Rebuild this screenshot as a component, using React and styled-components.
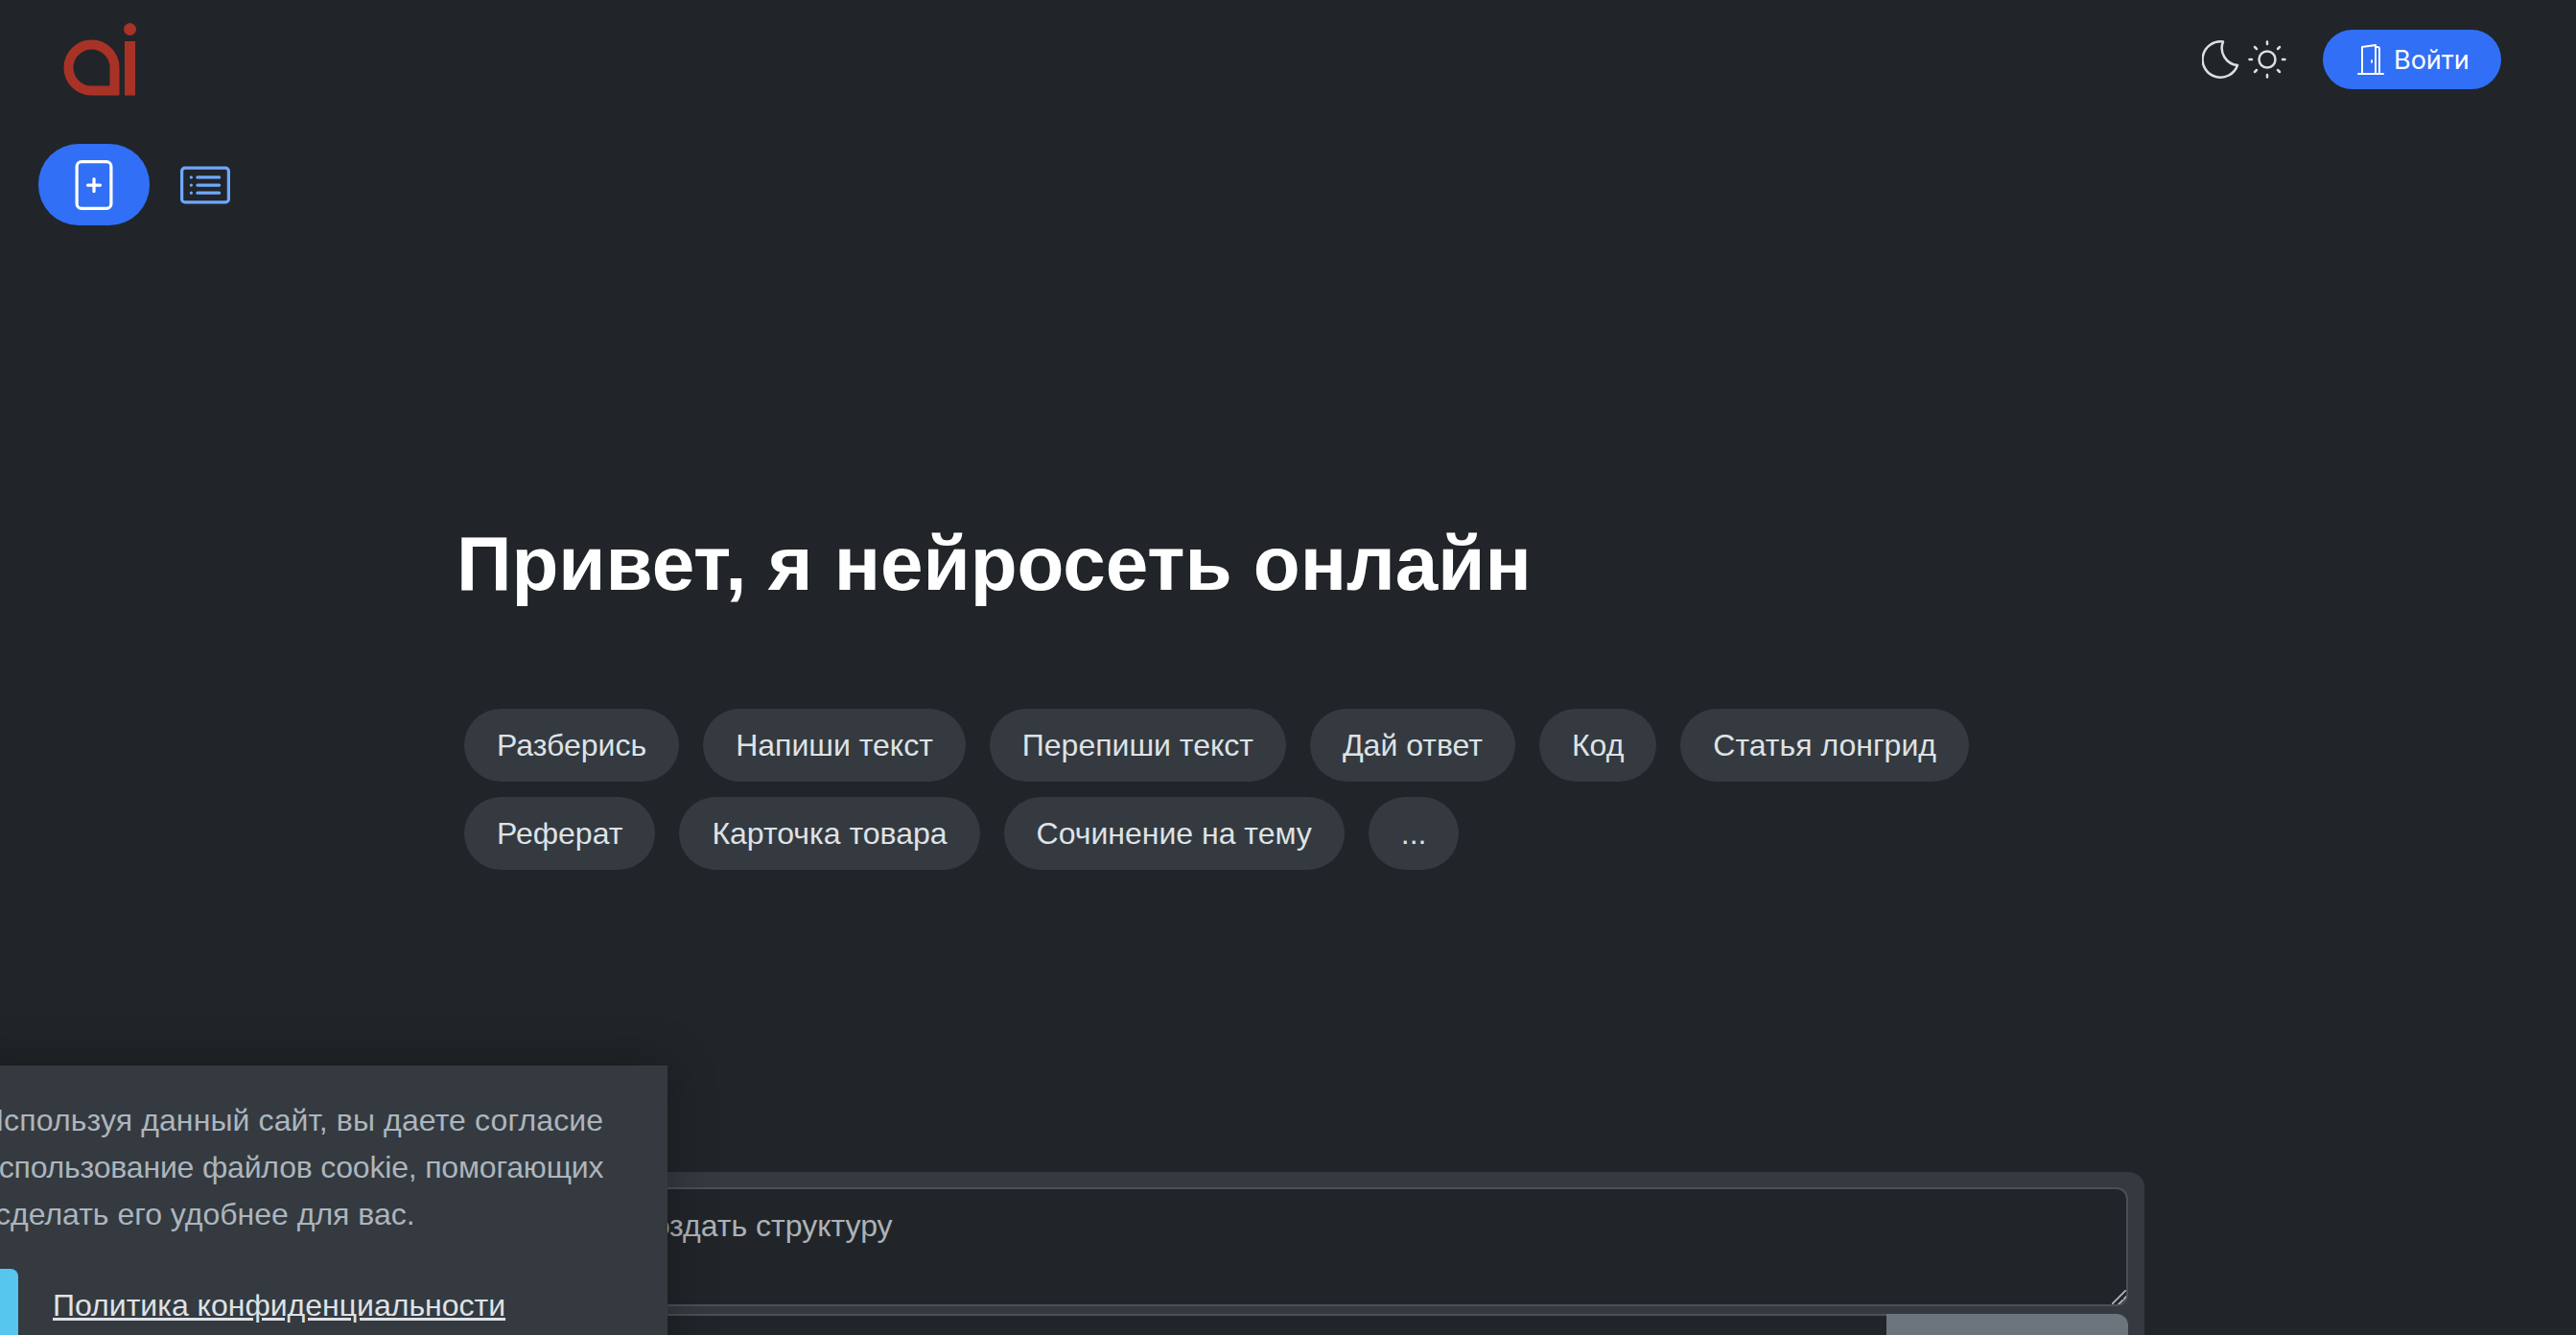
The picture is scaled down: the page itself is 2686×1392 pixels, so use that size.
import React from 'react';
import styled, { createGlobalStyle } from 'styled-components';
import { BsCardList, BsDoorOpen, BsFilePlus } from 'react-icons/bs';

const GlobalStyle = createGlobalStyle`
  html, body {
    margin: 0;
    padding: 0;
    background: #212529;
    font-family: "Liberation Sans", Arial, sans-serif;
    color: #dee2e6;
  }
  * {
    box-sizing: border-box;
  }
`;

const Page = styled.div`
  position: relative;
  height: 100vh;
  overflow: hidden;
  background: #212529;
`;

const Header = styled.header`
  display: flex;
  justify-content: space-between;
  align-items: flex-start;
  padding: 24px 78px 0 66px;
`;

const Logo = styled.svg`
  display: block;
  width: 76px;
  height: 76px;
`;

const HeaderActions = styled.div`
  display: flex;
  align-items: center;
  margin-top: 7px;
`;

const ThemeIcons = styled.div`
  display: flex;
  align-items: center;
  gap: 8px;
  margin-right: 38px;
`;

const ThemeIcon = styled.svg`
  display: block;
  width: 40px;
  height: 40px;
  fill: none;
  stroke: #dcdfe2;
  stroke-width: 2.5;
  stroke-linecap: round;
  stroke-linejoin: round;
`;

const LoginButton = styled.button`
  display: flex;
  align-items: center;
  gap: 8px;
  width: 186px;
  height: 62px;
  padding: 0 0 0 34px;
  border: 0;
  border-radius: 31px;
  background: #316ff6;
  color: #fff;
  font-family: Inter, "Liberation Sans", sans-serif;
  font-size: 27px;
`;

const ToolRow = styled.div`
  display: flex;
  align-items: center;
  gap: 32px;
  margin-top: 50px;
  padding-left: 40px;
`;

const NewChatButton = styled.button`
  display: flex;
  align-items: center;
  justify-content: center;
  width: 116px;
  height: 85px;
  padding: 0;
  border: 0;
  border-radius: 42px;
  background: #316ff6;
  color: #fff;
`;

const HistoryButton = styled.button`
  display: flex;
  padding: 0;
  border: 0;
  background: none;
  color: #6ea8fe;
`;

const Main = styled.main`
  padding-left: 476px;
`;

const Title = styled.h1`
  margin: 305px 0 0;
  font-size: 80px;
  line-height: 96px;
  font-weight: 700;
  color: #fff;
`;

const Chips = styled.div`
  display: flex;
  flex-wrap: wrap;
  gap: 16px 25px;
  max-width: 1600px;
  margin: 103px 0 0 8px;
`;

const Chip = styled.button`
  height: 76px;
  padding: 0 34px;
  border: 0;
  border-radius: 38px;
  background: #343a40;
  color: #dee2e6;
  font-family: inherit;
  font-size: 32px;
`;

const Composer = styled.form`
  width: 1783px;
  margin: 315px 0 0 -23px;
  padding: 16px 17px 0 16px;
  border-radius: 16px 16px 0 0;
  background: #343a40;
`;

const Prompt = styled.textarea`
  display: block;
  width: 100%;
  height: 124px;
  padding: 14px 24px;
  border: 2px solid #495057;
  border-radius: 12px;
  background: #212529;
  color: #dee2e6;
  font-family: inherit;
  font-size: 32px;
  line-height: 48px;
  &::placeholder {
    color: rgba(222, 226, 230, 0.75);
  }
  &::-webkit-resizer {
    background: linear-gradient(
      135deg,
      transparent 0 46%,
      #9a9ea3 46% 54%,
      transparent 54% 70%,
      #9a9ea3 70% 78%,
      transparent 78%
    );
  }
`;

const SubmitRow = styled.div`
  display: flex;
  margin-top: 8px;
`;

const TopicInput = styled.input`
  flex: 1;
  height: 90px;
  border: 2px solid #495057;
  border-right: 0;
  border-radius: 12px 0 0 12px;
  background: #212529;
`;

const SubmitButton = styled.button`
  width: 252px;
  height: 90px;
  border: 0;
  border-radius: 0 12px 12px 0;
  background: #6c757d;
`;

const CookiePanel = styled.aside`
  position: absolute;
  top: 1111px;
  left: -40px;
  width: 736px;
  height: 400px;
  padding: 33px 0 0 21px;
  background: #343a40;
  box-shadow: 0 0 48px rgba(0, 0, 0, 0.3);
`;

const CookieText = styled.p`
  margin: 0;
  font-size: 32px;
  line-height: 49px;
  color: #adb5bd;
`;

const CookieLine = styled.span`
  display: block;
  padding-left: ${(p) => p.$indent || 0}px;
  letter-spacing: ${(p) => p.$tracking || 0}px;
`;

const CookieActions = styled.div`
  display: flex;
  align-items: flex-start;
  gap: 36px;
  margin-top: 32px;
`;

const AcceptButton = styled.button`
  width: 38px;
  height: 76px;
  padding: 0;
  border: 0;
  border-radius: 8px;
  background: #57c6ee;
`;

const PolicyLink = styled.a`
  margin-top: 14px;
  font-size: 32px;
  line-height: 48px;
  color: #dee2e6;
  text-decoration: underline;
`;

const chips = [
  'Разберись',
  'Напиши текст',
  'Перепиши текст',
  'Дай ответ',
  'Код',
  'Статья лонгрид',
  'Реферат',
  'Карточка товара',
  'Сочинение на тему',
  '...',
];

export default function App() {
  return (
    <Page>
      <GlobalStyle />
      <Header>
        <Logo viewBox="66 24 76 76" aria-label="ai">
          <path d="M119.5 94.5H95.5a24 24 0 1 1 24-24z" fill="none" stroke="#a93226" strokeWidth="10" />
          <rect x="130" y="43" width="11" height="56.5" fill="#a93226" />
          <circle cx="135.5" cy="30.5" r="6.5" fill="#a93226" />
        </Logo>
        <HeaderActions>
          <ThemeIcons>
            <ThemeIcon viewBox="0 0 40 40">
              <path d="M22 1.5A18.7 18.7 0 1 0 37 26 A18 18 0 0 1 22 1.5Z" />
            </ThemeIcon>
            <ThemeIcon viewBox="0 0 40 40">
              <circle cx="20" cy="20" r="8.5" />
              <path d="M20 1.5v2.5M20 36v2.5M1.5 20H4M36 20h2.5M7 7l2 2M31 31l2 2M7 33l2-2M31 9l2-2" />
            </ThemeIcon>
          </ThemeIcons>
          <LoginButton type="button">
            <BsDoorOpen size={32} />
            Войти
          </LoginButton>
        </HeaderActions>
      </Header>
      <ToolRow>
        <NewChatButton type="button" aria-label="Новый чат">
          <BsFilePlus size={52} />
        </NewChatButton>
        <HistoryButton type="button" aria-label="История">
          <BsCardList size={52} />
        </HistoryButton>
      </ToolRow>
      <Main>
        <Title>Привет, я нейросеть онлайн</Title>
        <Chips>
          {chips.map((chip) => (
            <Chip key={chip} type="button">{chip}</Chip>
          ))}
        </Chips>
        <Composer>
          <Prompt placeholder="Например, создать структуру" />
          <SubmitRow>
            <TopicInput />
            <SubmitButton type="button" aria-label="Отправить" />
          </SubmitRow>
        </Composer>
      </Main>
      <CookiePanel>
        <CookieText>
          <CookieLine $tracking={0.12}>Используя данный сайт, вы даете согласие</CookieLine>
          <CookieLine $tracking={-0.18}>использование файлов cookie, помогающих</CookieLine>
          <CookieLine $indent={14}>сделать его удобнее для вас.</CookieLine>
        </CookieText>
        <CookieActions>
          <AcceptButton type="button" aria-label="Принять" />
          <PolicyLink href="#">Политика конфиденциальности</PolicyLink>
        </CookieActions>
      </CookiePanel>
    </Page>
  );
}
